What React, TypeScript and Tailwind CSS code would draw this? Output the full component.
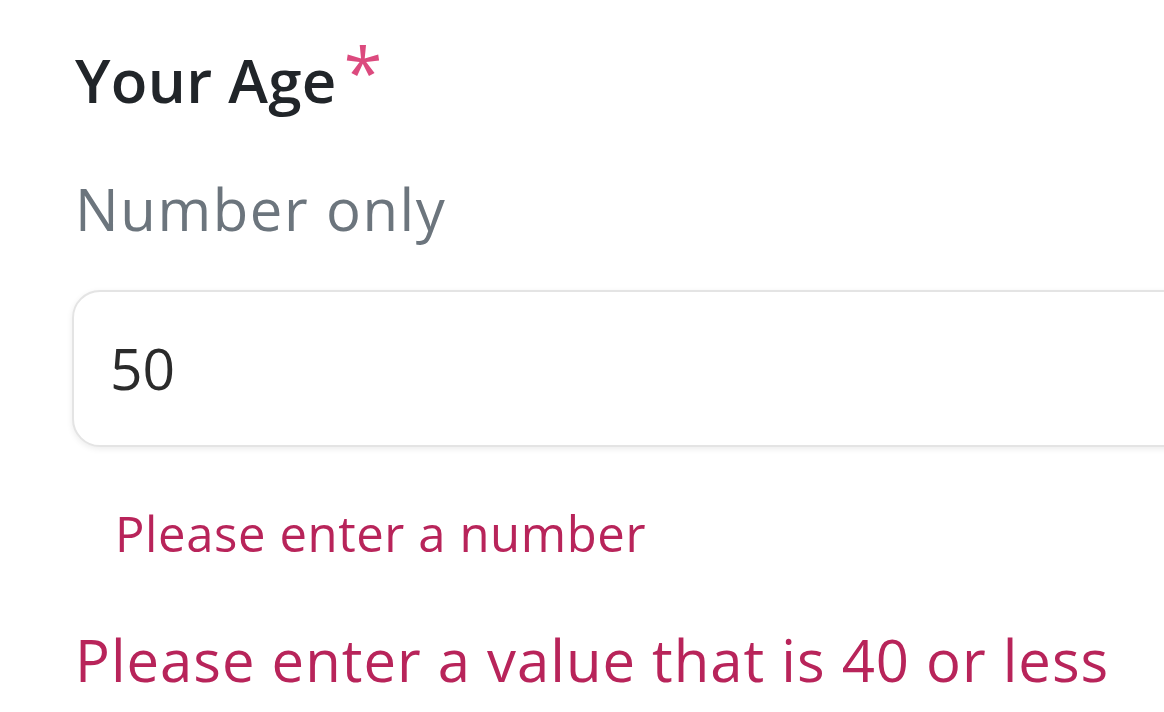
import React from 'react';

const App: React.FC = () => {
  return (
    <div className="min-h-screen w-full overflow-hidden bg-white font-['Open_Sans','Liberation_Sans',sans-serif]">
      <div className="pl-[75px] pt-[50px]">
        {/* label */}
        <div className="flex items-start leading-none">
          <span className="text-[60px] font-semibold leading-none tracking-[0.3px] text-[#212529]">Your Age</span>
          <span className="ml-[7px] mt-[-14px] text-[70px] leading-none text-[#dc4a7e]">*</span>
        </div>

        {/* helper */}
        <div className="mt-[70px] text-[58px] leading-none tracking-[1.6px] text-[#6c757d]">Number only</div>

        {/* input */}
        <div className="-ml-[3px] mt-[52px] flex h-[157px] w-[1200px] items-center rounded-[28px] border-2 border-[#e4e4e4] bg-white pl-[36px] shadow-[0_2px_6px_rgba(0,0,0,0.08)]">
          <span className="text-[57px] leading-none text-[#2b2b2b]">50</span>
        </div>

        {/* field error */}
        <div className="ml-[40px] mt-[62px] text-[49px] leading-none tracking-[0.6px] text-[#b8245a]">Please enter a number</div>

        {/* validation error */}
        <div className="mt-[73px] text-[58px] leading-none tracking-[1px] text-[#b8245a]">Please enter a value that is 40 or less</div>
      </div>
    </div>
  );
};

export default App;
